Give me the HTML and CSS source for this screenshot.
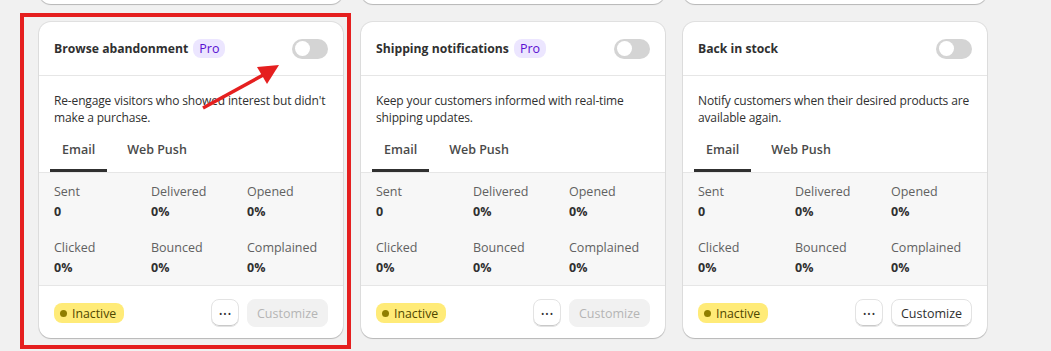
FILE: index.html
```html
<!DOCTYPE html>
<html>
<head>
<meta charset="utf-8">
<link rel="stylesheet" href="styles.css">
</head>
<body>
<div class="grid">
  <div class="card stub"></div>
  <div class="card stub"></div>
  <div class="card stub"></div>

  <div class="card">
    <div class="card-head">
      <div class="title">Browse abandonment <span class="pro">Pro</span></div>
      <span class="toggle"><span class="knob"></span></span>
    </div>
    <p class="desc">Re-engage visitors who showed interest but didn't make a purchase.</p>
    <div class="tabs"><span class="tab active">Email</span><span class="tab">Web Push</span></div>
    <div class="stats">
      <div class="stat"><span class="label">Sent</span><span class="value">0</span></div>
      <div class="stat"><span class="label">Delivered</span><span class="value">0%</span></div>
      <div class="stat"><span class="label">Opened</span><span class="value">0%</span></div>
      <div class="stat"><span class="label">Clicked</span><span class="value">0%</span></div>
      <div class="stat"><span class="label">Bounced</span><span class="value">0%</span></div>
      <div class="stat"><span class="label">Complained</span><span class="value">0%</span></div>
    </div>
    <div class="card-foot">
      <span class="status"><span class="dot"></span>Inactive</span>
      <div class="actions">
        <button class="btn more"><span class="dots">&bull;&bull;&bull;</span></button>
        <button class="btn customize disabled">Customize</button>
      </div>
    </div>
  </div>

  <div class="card">
    <div class="card-head">
      <div class="title">Shipping notifications <span class="pro">Pro</span></div>
      <span class="toggle"><span class="knob"></span></span>
    </div>
    <p class="desc">Keep your customers informed with real-time shipping updates.</p>
    <div class="tabs"><span class="tab active">Email</span><span class="tab">Web Push</span></div>
    <div class="stats">
      <div class="stat"><span class="label">Sent</span><span class="value">0</span></div>
      <div class="stat"><span class="label">Delivered</span><span class="value">0%</span></div>
      <div class="stat"><span class="label">Opened</span><span class="value">0%</span></div>
      <div class="stat"><span class="label">Clicked</span><span class="value">0%</span></div>
      <div class="stat"><span class="label">Bounced</span><span class="value">0%</span></div>
      <div class="stat"><span class="label">Complained</span><span class="value">0%</span></div>
    </div>
    <div class="card-foot">
      <span class="status"><span class="dot"></span>Inactive</span>
      <div class="actions">
        <button class="btn more"><span class="dots">&bull;&bull;&bull;</span></button>
        <button class="btn customize disabled">Customize</button>
      </div>
    </div>
  </div>

  <div class="card">
    <div class="card-head">
      <div class="title">Back in stock</div>
      <span class="toggle"><span class="knob"></span></span>
    </div>
    <p class="desc">Notify customers when their desired products are available again.</p>
    <div class="tabs"><span class="tab active">Email</span><span class="tab">Web Push</span></div>
    <div class="stats">
      <div class="stat"><span class="label">Sent</span><span class="value">0</span></div>
      <div class="stat"><span class="label">Delivered</span><span class="value">0%</span></div>
      <div class="stat"><span class="label">Opened</span><span class="value">0%</span></div>
      <div class="stat"><span class="label">Clicked</span><span class="value">0%</span></div>
      <div class="stat"><span class="label">Bounced</span><span class="value">0%</span></div>
      <div class="stat"><span class="label">Complained</span><span class="value">0%</span></div>
    </div>
    <div class="card-foot">
      <span class="status"><span class="dot"></span>Inactive</span>
      <div class="actions">
        <button class="btn more"><span class="dots">&bull;&bull;&bull;</span></button>
        <button class="btn customize">Customize</button>
      </div>
    </div>
  </div>
</div>

<div class="highlight"></div>
<svg class="arrow" width="100" height="60" viewBox="0 0 100 60">
  <line x1="4" y1="48" x2="66" y2="14" stroke="#e51f1f" stroke-width="3.5"/>
  <polygon points="80,5 58,7 68,24" fill="#e51f1f"/>
</svg>
</body>
</html>
```

FILE: styles.css
```css
* { box-sizing: border-box; }
html, body { margin: 0; padding: 0; }
body {
  background: #f1f1f1;
  font-family: "Open Sans", "Noto Sans", sans-serif;
  font-size: 12.5px;
  color: #303030;
  width: 1051px;
  height: 351px;
  overflow: hidden;
  position: relative;
}
.grid {
  display: grid;
  grid-template-columns: repeat(3, 304px);
  column-gap: 18px;
  row-gap: 18px;
  padding-left: 39px;
  margin-top: -96px;
}
.card {
  background: #fff;
  border-radius: 12px;
  box-shadow: 0 0 0 1px rgba(0,0,0,0.07), 0 1px 1px 0 rgba(0,0,0,0.18);
  overflow: hidden;
}
.stub { height: 100px; }
.card-head {
  height: 54px;
  padding: 0 15px;
  display: flex;
  align-items: center;
  justify-content: space-between;
  border-bottom: 1px solid #e6e6e6;
}
.title {
  font-weight: 700;
  font-size: 12.2px;
  display: flex;
  align-items: center;
  gap: 5px;
}
.pro {
  font-weight: 400;
  background: #ece6ff;
  color: #5a0fd1;
  border-radius: 8px;
  padding: 0 6px;
  height: 19px;
  line-height: 19px;
  font-size: 12.5px;
}
.toggle {
  width: 36px;
  height: 20px;
  border-radius: 10px;
  background: #d4d4d4;
  display: flex;
  align-items: center;
  padding-left: 3px;
}
.knob {
  width: 15px;
  height: 15px;
  border-radius: 50%;
  background: #fff;
}
.desc {
  margin: 0;
  padding: 16px 6px 0 15px;
  font-size: 12px;
  letter-spacing: -0.15px;
  line-height: 17px;
  height: 50px;
}
.tabs {
  display: flex;
  gap: 8px;
  padding-left: 11px;
  height: 47px;
  border-bottom: 1px solid #e6e6e6;
}
.tab {
  padding: 14px 12px 0;
  line-height: 20px;
  font-weight: 600;
  color: #4a4a4a;
  border-bottom: 3px solid transparent;
}
.tab.active { border-bottom-color: #303030; }
.stats {
  background: #f7f7f7;
  padding: 9px 15px 7px;
  display: grid;
  grid-template-columns: 97px 96px 1fr;
  row-gap: 16px;
  border-bottom: 1px solid #e6e6e6;
}
.stat { display: flex; flex-direction: column; }
.label { color: #616161; line-height: 20px; }
.value { font-weight: 700; line-height: 20px; }
.card-foot {
  height: 52px;
  padding: 2px 15px 0;
  display: flex;
  align-items: center;
  justify-content: space-between;
}
.status {
  background: #ffeb78;
  color: #4f4700;
  border-radius: 8px;
  height: 20px;
  padding: 0 8px 0 6px;
  display: flex;
  align-items: center;
  gap: 5px;
  font-weight: 500;
  font-size: 12.3px;
}
.dot {
  width: 7px;
  height: 7px;
  border-radius: 50%;
  background: #8f7e00;
}
.actions { display: flex; gap: 8px; }
.btn {
  font-family: inherit;
  font-size: 12.5px;
  height: 28px;
  border-radius: 8px;
  background: #fff;
  border: 1px solid #e3e3e3;
  box-shadow: inset 0 -1px 0 #c9c9c9;
  color: #303030;
  padding: 0 11px;
}
.btn.more { width: 28px; padding: 0; display: flex; align-items: center; justify-content: center; }
.dots { font-size: 9px; letter-spacing: 1px; color: #303030; margin-left: 1px; }
.customize { width: 81px; padding: 0; font-weight: 500; }
.customize.disabled {
  background: #f1f1f1;
  border-color: #f1f1f1;
  box-shadow: none;
  color: #b5b5b5;
}
.highlight {
  position: absolute;
  left: 20px;
  top: 13px;
  width: 331px;
  height: 336px;
  border: 4px solid #e51f1f;
}
.arrow {
  position: absolute;
  left: 199px;
  top: 60px;
}
```
